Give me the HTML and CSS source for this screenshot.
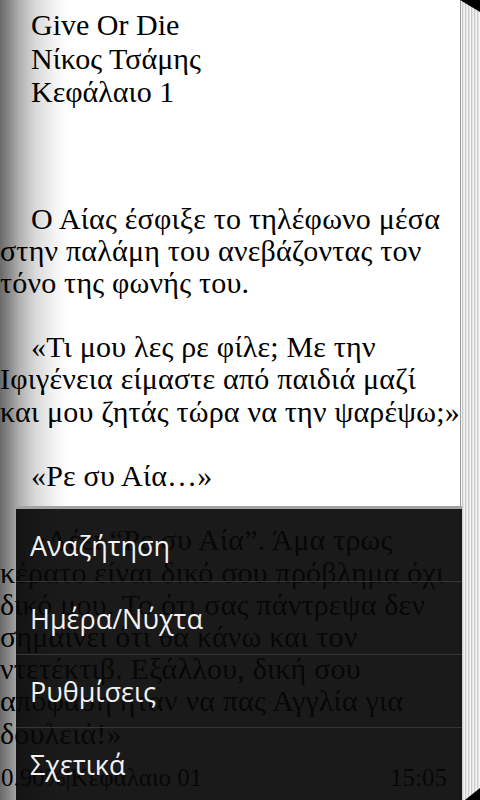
FILE: index.html
```html
<!DOCTYPE html>
<html lang="el">
<head>
<meta charset="utf-8">
<title>Give Or Die</title>
<link rel="stylesheet" href="styles.css">
</head>
<body>
<div class="screen">
  <div class="page">
    <div class="text">
      <div class="header">
        <div class="ln ind">Give Or Die</div>
        <div class="ln ind">Νίκος Τσάμης</div>
        <div class="ln ind">Κεφάλαιο 1</div>
      </div>
      <div class="body">
        <div class="ln ind">Ο Αίας έσφιξε το τηλέφωνο μέσα</div>
        <div class="ln">στην παλάμη του ανεβάζοντας τον</div>
        <div class="ln">τόνο της φωνής του.</div>
        <div class="ln"></div>
        <div class="ln ind">«Τι μου λες ρε φίλε; Με την</div>
        <div class="ln">Ιφιγένεια είμαστε από παιδιά μαζί</div>
        <div class="ln">και μου ζητάς τώρα να την ψαρέψω;»</div>
        <div class="ln"></div>
        <div class="ln ind">«Ρε συ Αία…»</div>
        <div class="ln"></div>
        <div class="ln ind">«Λέει “Ρε συ Αία”. Άμα τρως</div>
        <div class="ln">κέρατο είναι δικό σου πρόβλημα όχι</div>
        <div class="ln">δικό μου. Το ότι σας πάντρεψα δεν</div>
        <div class="ln">σημαίνει ότι θα κάνω και τον</div>
        <div class="ln">ντετέκτιβ. Εξάλλου, δική σου</div>
        <div class="ln">απόφαση ήταν να πας Αγγλία για</div>
        <div class="ln">δουλειά!»</div>
      </div>
    </div>
    <div class="status">
      <span>0.90%|Κεφάλαιο 01</span>
      <span>15:05</span>
    </div>
  </div>
  <div class="stack"></div>
  <div class="menu">
    <div class="item">Αναζήτηση</div>
    <div class="item">Ημέρα/Νύχτα</div>
    <div class="item">Ρυθμίσεις</div>
    <div class="item">Σχετικά</div>
  </div>
</div>
</body>
</html>
```
FILE: styles.css
```css
html, body {
  margin: 0;
  padding: 0;
  width: 480px;
  height: 800px;
  overflow: hidden;
  background: #fff;
}

.screen {
  position: relative;
  display: flex;
  width: 480px;
  height: 800px;
  overflow: hidden;
}

.page {
  width: 460px;
  height: 800px;
  display: flex;
  flex-direction: column;
  justify-content: space-between;
  overflow: hidden;
  background: linear-gradient(to right, #6a6a6a 0px, #8c8c8c 10px, #b2b2b2 20px, #dadada 36px, #f5f5f5 56px, #ffffff 70px);
  font-family: "Liberation Serif", "Times New Roman", serif;
  color: #000;
}

.text {
  font-size: 30px;
  line-height: 32.2px;
  letter-spacing: 0.2px;
}

.ln {
  white-space: nowrap;
  height: 32.2px;
}

.ind {
  padding-left: 31px;
}

.header {
  padding-top: 8px;
  letter-spacing: 0;
}

.header .ln {
  height: 33.5px;
  line-height: 33.5px;
}

.body {
  padding-top: 94px;
}

.status {
  display: flex;
  justify-content: space-between;
  font-size: 25px;
  line-height: 30px;
  padding: 0 13px 7px 1px;
}

.stack {
  position: relative;
  width: 20px;
  height: 800px;
  border-left: 1px solid #9a9a9a;
  box-sizing: border-box;
  background: repeating-linear-gradient(to right, #f4f4f4 0px, #f4f4f4 1px, #cacaca 1px, #cacaca 2px, #e6e6e6 2px, #e6e6e6 3px);
}

.stack::before,
.stack::after {
  content: "";
  position: absolute;
  right: 0;
  background: #000;
}

.stack::before {
  top: 0;
  width: 20px;
  height: 12px;
  clip-path: polygon(0 0, 100% 0, 100% 100%);
}

.stack::after {
  bottom: 0;
  width: 15px;
  height: 12px;
  clip-path: polygon(0 100%, 100% 0, 100% 100%);
}

.menu {
  position: absolute;
  left: 16px;
  bottom: 0;
  width: 446px;
  border-top: 3px solid #a2a2a2;
  background: rgba(8, 8, 8, 0.925);
  display: flex;
  flex-direction: column;
}

.item {
  height: 72px;
  display: flex;
  align-items: center;
  padding-left: 14px;
  font-family: "Open Sans", "Noto Sans", sans-serif;
  font-size: 27px;
  color: #f2f2f2;
  border-top: 1px solid #353535;
}

.item:first-child {
  border-top: none;
}
```
